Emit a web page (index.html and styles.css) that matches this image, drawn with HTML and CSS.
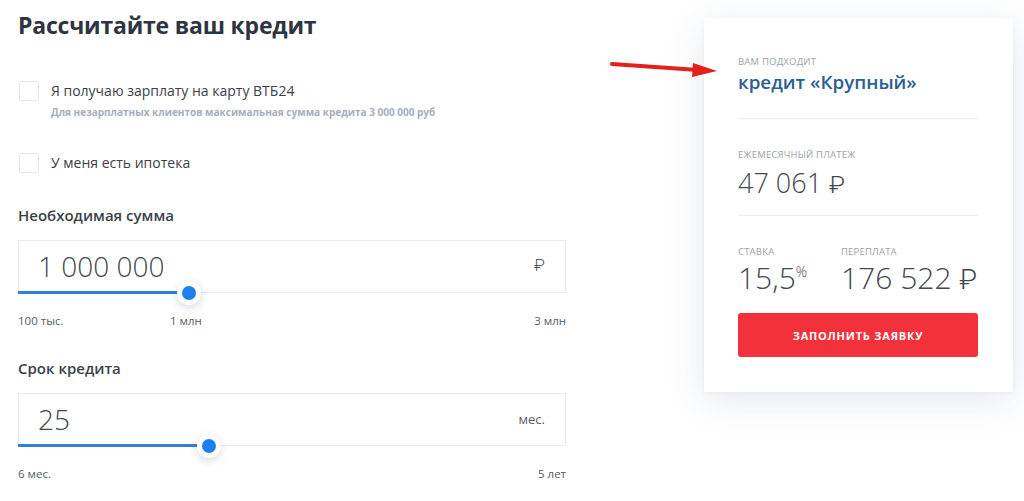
FILE: index.html
```html
<!DOCTYPE html>
<html lang="ru">
<head>
<meta charset="utf-8">
<title>Рассчитайте ваш кредит</title>
<link rel="stylesheet" href="styles.css">
</head>
<body>
<div class="page">
  <div class="calc">
    <h1 class="title">Рассчитайте ваш кредит</h1>

    <div class="check-row first">
      <span class="box"></span>
      <span class="check-text">Я получаю зарплату на карту ВТБ24</span>
    </div>
    <div class="hint">Для незарплатных клиентов максимальная сумма кредита 3 000 000 руб</div>

    <div class="check-row second">
      <span class="box"></span>
      <span class="check-text">У меня есть ипотека</span>
    </div>

    <div class="field-label first-label">Необходимая сумма</div>
    <div class="field">
      <span class="field-value">1 000 000</span>
      <span class="field-unit rub">₽</span>
      <div class="track"><div class="fill" style="width: 171px"></div></div>
      <span class="thumb" style="left: 171px"></span>
    </div>
    <div class="scale">
      <span>100 тыс.</span>
      <span class="scale-mid">1 млн</span>
      <span>3 млн</span>
    </div>

    <div class="field-label">Срок кредита</div>
    <div class="field">
      <span class="field-value">25</span>
      <span class="field-unit small">мес.</span>
      <div class="track"><div class="fill" style="width: 191px"></div></div>
      <span class="thumb" style="left: 191px"></span>
    </div>
    <div class="scale">
      <span>6 мес.</span>
      <span>5 лет</span>
    </div>
  </div>

  <div class="card">
    <div class="cap">Вам подходит</div>
    <div class="product">кредит «Крупный»</div>
    <div class="divider"></div>
    <div class="cap top30">Ежемесячный платеж</div>
    <div class="amount">47 061 <span class="rub">₽</span></div>
    <div class="divider second-div"></div>
    <div class="pair">
      <div class="pair-item">
        <div class="cap">Ставка</div>
        <div class="big">15,5<sup class="pct">%</sup></div>
      </div>
      <div class="pair-item">
        <div class="cap">Переплата</div>
        <div class="big">176 522 <span class="rub">₽</span></div>
      </div>
    </div>
    <button class="apply">Заполнить заявку</button>
  </div>

  <svg class="arrow" width="110" height="24" viewBox="0 0 110 24">
    <line x1="2" y1="7" x2="88" y2="13" stroke="#e2211c" stroke-width="4" stroke-linecap="round"/>
    <polygon points="83,6 107,14 82,20" fill="#e2211c"/>
  </svg>
</div>
</body>
</html>
```

FILE: styles.css
```css
* { box-sizing: border-box; }

html, body {
  margin: 0;
  padding: 0;
  background: #ffffff;
}

body {
  font-family: "Open Sans", "Liberation Sans", sans-serif;
  color: #3a3f47;
  width: 1024px;
  height: 501px;
  overflow: hidden;
}

.page {
  position: relative;
  display: flex;
  align-items: flex-start;
}

.calc {
  width: 566px;
  padding-left: 18px;
  padding-top: 10px;
  flex: none;
}

.title {
  margin: 0;
  font-size: 23px;
  line-height: 30px;
  font-weight: 700;
  color: #2e3442;
  letter-spacing: -0.2px;
}

.check-row {
  display: flex;
  align-items: center;
  gap: 12px;
  height: 20px;
  padding-left: 1px;
}
.check-row.first { margin-top: 41px; }
.check-row.second { margin-top: 34px; }

.box {
  width: 20px;
  height: 20px;
  border: 1px solid #e4e7eb;
  border-radius: 2px;
  background: #fff;
  flex: none;
}

.check-text {
  font-size: 14px;
  line-height: 20px;
  color: #3c4048;
}

.hint {
  margin-top: 4px;
  padding-left: 33px;
  font-size: 10px;
  line-height: 14px;
  font-weight: 700;
  color: #a6aebb;
}

.field-label {
  margin-top: 29px;
  font-size: 15px;
  line-height: 20px;
  font-weight: 600;
  color: #3a3f48;
}
.field-label.first-label { margin-top: 32px; }

.field {
  position: relative;
  margin-top: 15px;
  height: 53px;
  border: 1px solid #e6e9ed;
  display: flex;
  align-items: center;
  justify-content: space-between;
  padding: 0 20px 2px 19px;
}

.field-value {
  font-size: 28px;
  font-weight: 300;
  color: #44484f;
  line-height: 34px;
}

.rub {
  font-family: Roboto, Inter, "Noto Sans", sans-serif;
  font-weight: 300;
  font-size: 0.92em;
  line-height: 1;
}

.field-unit {
  font-size: 17px;
  color: #555a60;
}
.field-unit.small {
  font-size: 13px;
  font-weight: 400;
  color: #5b6066;
}

.track {
  position: absolute;
  left: -1px;
  right: -1px;
  bottom: -2px;
  height: 3px;
}

.fill {
  height: 3px;
  background: #2f80d8;
}

.thumb {
  position: absolute;
  bottom: -1px;
  width: 24px;
  height: 24px;
  margin-left: -13px;
  margin-bottom: -12px;
  border-radius: 50%;
  background: #ffffff;
  box-shadow: 0 3px 8px rgba(40, 60, 100, 0.18);
}
.thumb::after {
  content: "";
  position: absolute;
  left: 5px;
  top: 5px;
  width: 14px;
  height: 14px;
  border-radius: 50%;
  background: #1e7ef0;
}

.scale {
  position: relative;
  margin-top: 20px;
  display: flex;
  justify-content: space-between;
  font-size: 11.5px;
  line-height: 16px;
  color: #575c63;
}
.scale-mid {
  position: absolute;
  left: 152px;
}

.card {
  flex: none;
  margin-left: 138px;
  margin-top: 18px;
  width: 309px;
  height: 374px;
  background: #ffffff;
  padding: 38px 35px 0 34px;
  box-shadow: 0 8px 36px rgba(50, 75, 140, 0.13), 0 1px 4px rgba(50, 75, 140, 0.05);
}

.cap {
  font-size: 9.5px;
  line-height: 12px;
  text-transform: uppercase;
  color: #9ca2aa;
  letter-spacing: 0.2px;
  white-space: nowrap;
}
.cap.top30 { margin-top: 30px; }

.product {
  margin-top: 2px;
  font-size: 18.8px;
  line-height: 24px;
  font-weight: 600;
  color: #2b5e92;
}

.divider {
  height: 1px;
  background: #e9ecf0;
  margin-top: 24px;
}
.divider.second-div { margin-top: 16px; }

.amount {
  margin-top: 6px;
  height: 32px;
  font-size: 27px;
  line-height: 32px;
  font-weight: 300;
  color: #43474e;
}

.pair {
  display: flex;
  margin-top: 30px;
}
.pair-item { flex: none; }
.pair-item:first-child { width: 103px; }

.big {
  margin-top: 2px;
  height: 36px;
  font-size: 30px;
  line-height: 36px;
  font-weight: 300;
  color: #43474e;
  white-space: nowrap;
}

.pct {
  font-size: 14px;
  vertical-align: 12px;
  line-height: 0;
}

.apply {
  display: block;
  width: 240px;
  height: 44px;
  margin-top: 17px;
  border: none;
  border-radius: 3px;
  background: #f2313d;
  color: #ffffff;
  font-family: "Open Sans", "Liberation Sans", sans-serif;
  font-size: 11px;
  font-weight: 700;
  letter-spacing: 0.8px;
  text-transform: uppercase;
}

.arrow {
  position: absolute;
  left: 610px;
  top: 57px;
}
```
